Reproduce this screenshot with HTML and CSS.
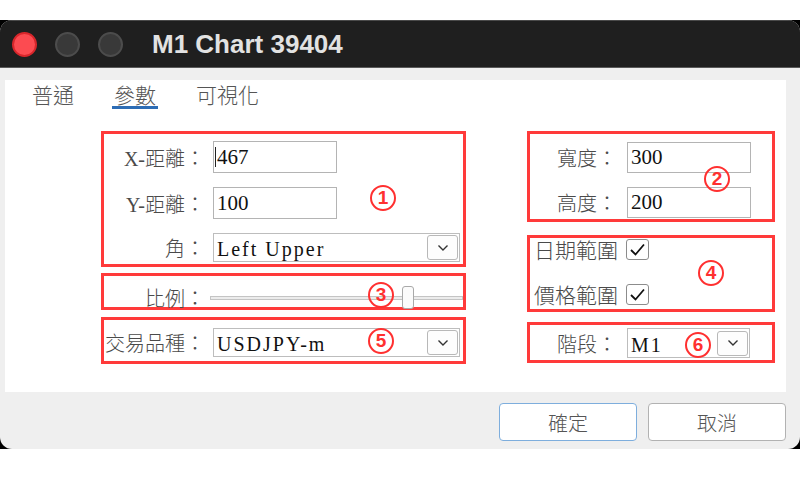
FILE: index.html
```html
<!DOCTYPE html>
<html lang="zh-Hant">
<head>
    <meta charset="UTF-8">
    <meta name="viewport" content="width=device-width, initial-scale=1.0">
    <title>M1 Chart 39404</title>
    <link rel="stylesheet" href="styles.css">
</head>
<body>

<div class="desk">
    <div class="window">
        <div class="titlebar">
            <span class="light light-close"></span>
            <span class="light"></span>
            <span class="light"></span>
            <span class="title">M1 Chart 39404</span>
        </div>

        <div class="window-body">
            <div class="panel">
                <div class="tabs">
                    <span class="tab">普通</span>
                    <span class="tab active">參數</span>
                    <span class="tab">可視化</span>
                </div>

                <div class="form">
                    <!-- left column: position, scale, symbol -->
                    <div class="col col-left">
                        <div class="group g-pos">
                            <div class="row">
                                <span class="label">X-距離：</span>
                                <div class="input input-focus"><span class="caret"></span>467</div>
                            </div>
                            <div class="row">
                                <span class="label">Y-距離：</span>
                                <div class="input">100</div>
                            </div>
                            <div class="row">
                                <span class="label">角：</span>
                                <div class="combo combo-wide">
                                    <span class="combo-text">Left Upper</span>
                                    <span class="drop"><svg width="12" height="8" viewBox="0 0 12 8"><polyline points="1.5,1.5 6,6 10.5,1.5" fill="none" stroke="#333" stroke-width="1.4"/></svg></span>
                                </div>
                            </div>
                            <span class="mark mark-1">1</span>
                        </div>

                        <div class="group g-scale">
                            <div class="row">
                                <span class="label">比例：</span>
                                <div class="slider">
                                    <div class="track"></div>
                                    <div class="handle"></div>
                                </div>
                            </div>
                            <span class="mark mark-3">3</span>
                        </div>

                        <div class="group g-symbol">
                            <div class="row">
                                <span class="label">交易品種：</span>
                                <div class="combo combo-wide">
                                    <span class="combo-text">USDJPY-m</span>
                                    <span class="drop"><svg width="12" height="8" viewBox="0 0 12 8"><polyline points="1.5,1.5 6,6 10.5,1.5" fill="none" stroke="#333" stroke-width="1.4"/></svg></span>
                                </div>
                            </div>
                            <span class="mark mark-5">5</span>
                        </div>
                    </div>

                    <!-- right column: size, ranges, timeframe -->
                    <div class="col col-right">
                        <div class="group g-size">
                            <div class="row">
                                <span class="label label-short">寬度：</span>
                                <div class="input">300</div>
                            </div>
                            <div class="row">
                                <span class="label label-short">高度：</span>
                                <div class="input">200</div>
                            </div>
                            <span class="mark mark-2">2</span>
                        </div>

                        <div class="group g-range">
                            <div class="check-row">
                                <span class="check-label">日期範圍</span>
                                <span class="check"><svg width="17" height="15" viewBox="0 0 17 15"><polyline points="2,8 6.5,12.5 15,2.5" fill="none" stroke="#111" stroke-width="1.8"/></svg></span>
                            </div>
                            <div class="check-row">
                                <span class="check-label">價格範圍</span>
                                <span class="check"><svg width="17" height="15" viewBox="0 0 17 15"><polyline points="2,8 6.5,12.5 15,2.5" fill="none" stroke="#111" stroke-width="1.8"/></svg></span>
                            </div>
                            <span class="mark mark-4">4</span>
                        </div>

                        <div class="group g-period">
                            <div class="row">
                                <span class="label label-short">階段：</span>
                                <div class="combo combo-short">
                                    <span class="combo-text">M1</span>
                                    <span class="drop"><svg width="12" height="8" viewBox="0 0 12 8"><polyline points="1.5,1.5 6,6 10.5,1.5" fill="none" stroke="#333" stroke-width="1.4"/></svg></span>
                                </div>
                            </div>
                            <span class="mark mark-6">6</span>
                        </div>
                    </div>
                </div>
            </div>

            <div class="actions">
                <button class="btn btn-ok">確定</button>
                <button class="btn">取消</button>
            </div>
        </div>
    </div>
</div>

</body>
</html>
```

FILE: styles.css
```css
body {
    margin: 0;
    background-color: #fff;
    font-family: "Liberation Serif", "Noto Sans CJK TC", serif;
}
.desk {
    margin-top: 20px;
    width: 800px;
    height: 429px;
    background-color: #000;
}
.window {
    width: 800px;
    height: 429px;
    background-color: #efefef;
    border-radius: 12px;
    overflow: hidden;
}

/* title bar */
.titlebar {
    display: flex;
    align-items: center;
    height: 48px;
    box-sizing: border-box;
    padding-left: 12px;
    background-color: #1f1f1f;
    border-top: 1px solid #4a4a4a;
    border-bottom: 1px solid #5a5a5a;
}
.light {
    width: 25px;
    height: 25px;
    box-sizing: border-box;
    border-radius: 50%;
    background-color: #393939;
    border: 2px solid #4c4c4c;
    margin-right: 18px;
}
.light-close {
    background-color: #fc4b51;
    border: 2px solid #d8262b;
}
.title {
    margin-left: 11px;
    font-family: "Liberation Sans", Arial, sans-serif;
    font-weight: bold;
    font-size: 26px;
    color: #e2e2e2;
}

.window-body {
    padding: 12px 14px 0 5px;
}
.panel {
    height: 312px;
    box-sizing: border-box;
    padding-top: 2px;
    background-color: #fff;
}

/* tabs */
.tabs {
    display: flex;
    gap: 40px;
    padding-left: 27px;
    font-family: "Noto Sans CJK TC", sans-serif;
    font-weight: 300;
    font-size: 21px;
    line-height: 24px;
    color: #555;
}
.tab {
    padding-bottom: 3px;
}
.tab.active {
    padding: 0 2px;
    margin: 0 -2px;
    border-bottom: 3px solid #2d6db5;
}

/* form layout */
.form {
    display: flex;
    margin-top: 22px;
    padding-left: 96px;
}
.col {
    display: flex;
    flex-direction: column;
}
.col-left {
    width: 365px;
}
.col-right {
    width: 248px;
    margin-left: 61px;
}
.group {
    position: relative;
    box-sizing: border-box;
    border: 3px solid #ff3a3a;
    display: flex;
    flex-direction: column;
}
.g-pos {
    height: 136px;
    padding-top: 7px;
    gap: 14px;
}
.g-scale {
    height: 37px;
    margin-top: 6px;
    padding-top: 7px;
}
.g-symbol {
    height: 47px;
    margin-top: 7px;
    padding-top: 8px;
}
.g-size {
    height: 91px;
    margin-top: 0;
    padding-top: 8px;
    gap: 14px;
}
.g-range {
    height: 77px;
    margin-top: 13px;
    padding-left: 4px;
    gap: 23px;
}
.g-period {
    height: 41px;
    margin-top: 10px;
    padding-top: 3px;
}

.row {
    display: flex;
    align-items: center;
}
.label {
    width: 101px;
    margin-right: 8px;
    text-align: right;
    white-space: nowrap;
    font-size: 20px;
    font-weight: 300;
    color: #4a4a4a;
}
.label-short {
    width: 87px;
    margin-right: 10px;
}

/* text inputs */
.input {
    width: 124px;
    height: 32px;
    box-sizing: border-box;
    padding-left: 3px;
    border: 1px solid #b4b4b4;
    background-color: #fff;
    font-family: "Liberation Serif", serif;
    font-size: 21px;
    line-height: 30px;
    color: #111;
}
.g-size .input {
    height: 31px;
    line-height: 29px;
}
.input-focus {
    padding-left: 1px;
}
.caret {
    display: inline-block;
    width: 1px;
    height: 20px;
    margin-right: 1px;
    vertical-align: -3px;
    background-color: #222;
}

/* combo boxes */
.combo {
    display: flex;
    align-items: center;
    box-sizing: border-box;
    height: 29px;
    padding: 0 1px 0 3px;
    border: 1px solid #bdbdbd;
    background-color: #fff;
}
.combo-wide {
    width: 247px;
}
.combo-short {
    width: 123px;
    height: 30px;
}
.combo-text {
    flex: 1;
    font-family: "Liberation Serif", serif;
    font-size: 20px;
    letter-spacing: 2px;
    line-height: 20px;
    padding-top: 3px;
    color: #111;
}
.drop {
    display: flex;
    align-items: center;
    justify-content: center;
    width: 31px;
    height: 25px;
    box-sizing: border-box;
    border: 1px solid #b8b8b8;
    border-radius: 3px;
    background-color: #fdfdfd;
}

/* slider */
.slider {
    position: relative;
    flex: 1;
    height: 23px;
    margin-left: -3px;
}
.track {
    margin-top: 10px;
    height: 4px;
    box-sizing: border-box;
    border: 1px solid #c4c4c4;
    background-color: #ececec;
}
.handle {
    position: absolute;
    left: 192px;
    top: 0;
    width: 12px;
    height: 23px;
    box-sizing: border-box;
    border: 1px solid #a9a9a9;
    border-radius: 3px;
    background-color: #fbfbfb;
}

/* checkboxes */
.check-row {
    display: flex;
    align-items: center;
    height: 22px;
}
.check-label {
    font-size: 21px;
    font-weight: 300;
    color: #4a4a4a;
}
.check {
    display: flex;
    align-items: center;
    justify-content: center;
    width: 23px;
    height: 21px;
    margin-left: 8px;
    box-sizing: border-box;
    border: 1px solid #8c8c8c;
    border-radius: 3px;
    background-color: #fff;
}

/* red circled numbers */
.mark {
    position: absolute;
    width: 26px;
    height: 26px;
    box-sizing: border-box;
    border: 2.5px solid #ff3030;
    border-radius: 50%;
    text-align: center;
    font-family: "Liberation Sans", Arial, sans-serif;
    font-weight: bold;
    font-size: 19px;
    line-height: 21px;
    color: #ff3030;
}
.mark-1 { left: 266px; top: 51px; }
.mark-2 { left: 174px; top: 32px; }
.mark-3 { left: 264px; top: 6px; }
.mark-4 { left: 168px; top: 22px; }
.mark-5 { left: 264px; top: 8px; }
.mark-6 { left: 155px; top: 7px; }

/* dialog buttons */
.actions {
    display: flex;
    justify-content: flex-end;
    gap: 11px;
    margin-top: 11px;
}
.btn {
    width: 138px;
    height: 38px;
    border: 1px solid #b2b2b2;
    border-radius: 4px;
    background-color: #fff;
    font-family: "Noto Sans CJK TC", sans-serif;
    font-weight: 300;
    font-size: 20px;
    color: #555;
    padding: 0;
}
.btn-ok {
    border-color: #7eaedd;
}
```
